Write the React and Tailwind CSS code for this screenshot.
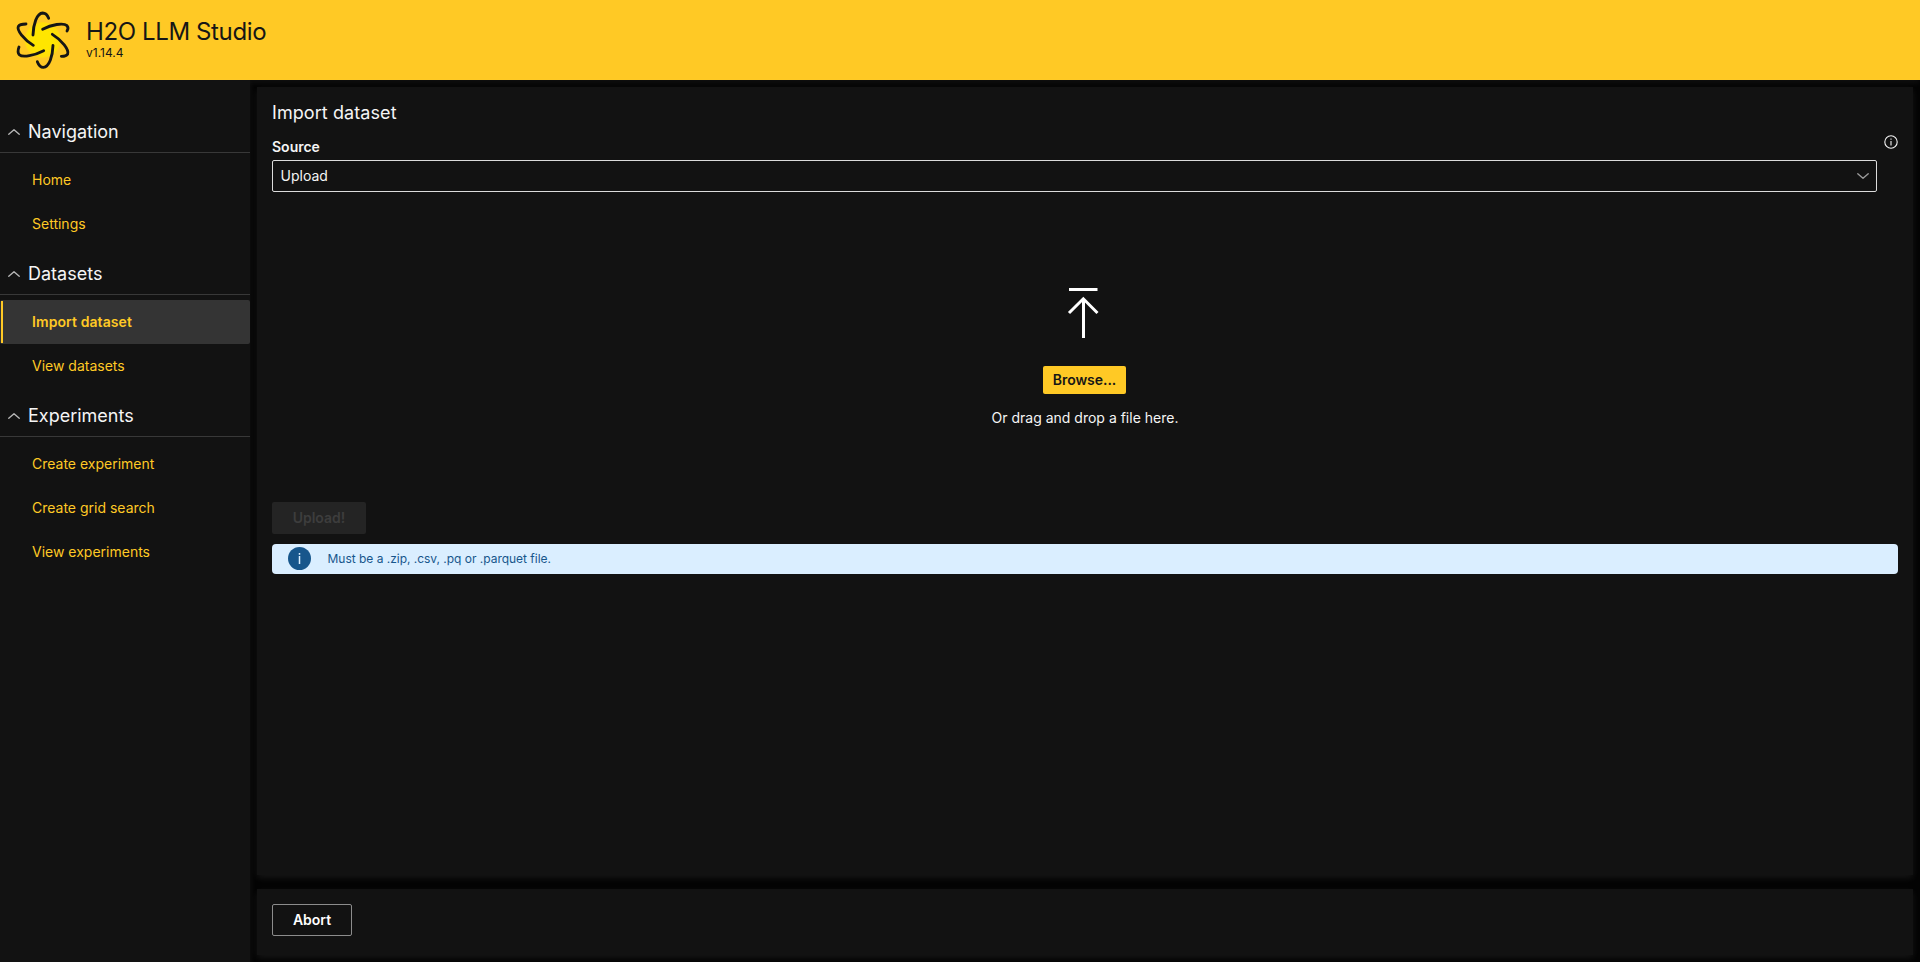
import { ChevronDown, ChevronUp } from 'lucide-react';
import clsx from 'clsx';

const NAV = [
  { title: 'Navigation', items: ['Home', 'Settings'] },
  { title: 'Datasets', items: ['Import dataset', 'View datasets'] },
  { title: 'Experiments', items: ['Create experiment', 'Create grid search', 'View experiments'] },
];

const CARD = 'bg-[#121212] shadow-[0_3px_7px_rgba(255,255,255,0.08)]';

const Logo = () => (
  <svg width="64" height="68" viewBox="0 0 192 204" fill="none">
    <defs>
      <radialGradient id="glow">
        <stop offset="0.55" stopColor="#ffe600" />
        <stop offset="1" stopColor="#ffdc0c" />
      </radialGradient>
    </defs>
    <ellipse cx="98" cy="105" rx="54" ry="53" fill="url(#glow)" />
    <g stroke="#161616" strokeWidth="8.500" strokeLinecap="round" strokeLinejoin="round">
      <path d="M69 90C70 58 80 25 98 24C107 24 113 32 116 40" />
      <path d="M98 73C124 59 160 52 171 62C175 66 174 73 171 78" />
      <path d="M127 88C156 106 178 134 173 147C170 153 162 154 154 154" />
      <path d="M129 121C128 153 118 186 100 187C91 187 85 178 82 170" />
      <path d="M101 137C74 151 38 159 28 149C23 144 24 134 27 126" />
      <path d="M70 121C41 103 20 76 25 64C29 57 39 57 48 57" />
    </g>
  </svg>
);

const Header = () => (
  <header className="flex h-20 shrink-0 bg-[#ffc925] pl-[10px] pt-[5px] text-[#161616] shadow-[0_3px_7px_rgba(255,255,255,0.06)]">
    <Logo />
    <div className="ml-3 flex flex-col pt-[11px]">
      <h1 className="text-2xl leading-[31px] tracking-[-0.38px]">H2O LLM Studio</h1>
      <span className="text-xs leading-3">v1.14.4</span>
    </div>
  </header>
);

const NavGroup = ({ title, items }) => (
  <div>
    <div className="mb-[5px] flex h-[49px] items-center border-b border-[#383838] pl-[7px] pt-[7px]">
      <ChevronUp size={14} strokeWidth={1.5} className="scale-x-[1.5] scale-y-[1.3] text-[#b5b5b5]" />
      <span className="ml-[7px] text-lg leading-6 text-[#f5f5f5]">{title}</span>
    </div>
    {items.map((item) => {
      const active = item === 'Import dataset';
      return (
        <a
          key={item}
          className={clsx(
            'flex h-11 items-center pl-8 text-sm text-[#ffc925]',
            active && 'relative rounded-[2px] bg-[#343434] font-semibold tracking-[0.09px]',
          )}
        >
          {active && <span className="absolute bottom-px left-px top-px w-[2px] bg-[#ffc925]" />}
          {item}
        </a>
      );
    })}
  </div>
);

const UploadIcon = () => (
  <svg width="32" height="52" viewBox="0 0 32 52" fill="none" stroke="#fff" strokeWidth="3">
    <path d="M2 1.5H30.500" />
    <path d="M16.500 50V11M2 25L16.300 10.800L30.500 25" />
  </svg>
);

const InfoIcon = () => (
  <svg width="14" height="14" viewBox="0 0 14 14" fill="none" stroke="#f5f5f5" strokeWidth="1.100">
    <circle cx="7" cy="7" r="6.200" />
    <path d="M7 6V10.500M7 3.500V4.700" />
  </svg>
);

export default function App() {
  return (
    <div className="flex h-[962px] w-full flex-col overflow-hidden bg-[#030303] font-['Inter',sans-serif] text-sm text-[#f5f5f5]">
      <Header />
      <div className="flex min-h-0 flex-1">
        <nav className={clsx(CARD, 'w-[250px] shrink-0 pt-6')}>
          {NAV.map((group) => (
            <NavGroup key={group.title} {...group} />
          ))}
        </nav>

        <main className="flex flex-1 flex-col gap-[14px] p-[7px]">
          <section className={clsx(CARD, 'flex-1 px-[15px] pt-[14px]')}>
            <h2 className="text-lg leading-6 tracking-[0.08px]">Import dataset</h2>

            <div className="mt-3 flex justify-between">
              <div className="w-[1605px]">
                <label className="block font-semibold leading-5">Source</label>
                <div className="mt-[3px] flex h-8 items-center justify-between rounded-[2px] border border-[#dcdcdc] pl-[7.5px] pr-[6px]">
                  Upload
                  <ChevronDown size={14} strokeWidth={1.5} className="scale-x-[1.5] scale-y-[1.3] text-[#999]" />
                </div>
              </div>
              <div className="-mt-[2px] mr-[0.5px]">
                <InfoIcon />
              </div>
            </div>

            <div className="mt-24 flex flex-col items-center">
              <div className="mr-1">
                <UploadIcon />
              </div>
              <button className="mr-[2px] mt-[26px] h-7 w-[83px] rounded-[2px] bg-[#ffc925] pl-px font-semibold tracking-[-0.05px] text-[#161616]">
                Browse...
              </button>
              <p className="mt-[14px] leading-5">Or drag and drop a file here.</p>
            </div>

            <button className="mt-[74px] block h-8 w-[94px] rounded-[2px] bg-[#242424] font-semibold text-[#3d3d3d]">
              Upload!
            </button>

            <div className="mt-[10px] flex h-[30px] items-center rounded bg-[#daeeff] pl-4 text-xs text-[#17568c]">
              <svg width="23" height="23" viewBox="0 0 23 23" className="-mt-[2px]">
                <circle cx="11.500" cy="11.500" r="11.500" fill="#17568c" />
                <path d="M11.500 9V17M11.500 6V7.700" stroke="#daeeff" strokeWidth="1.500" />
              </svg>
              <span className="ml-[16.5px] tracking-[-0.02px]">Must be a .zip, .csv, .pq or .parquet file.</span>
            </div>
          </section>

          <section className={clsx(CARD, 'h-[66px] shrink-0 px-[15px] pt-[15px]')}>
            <button className="h-8 w-20 rounded-[2px] border border-[#8c8c8c] font-semibold text-white">Abort</button>
          </section>
        </main>
      </div>
    </div>
  );
}
